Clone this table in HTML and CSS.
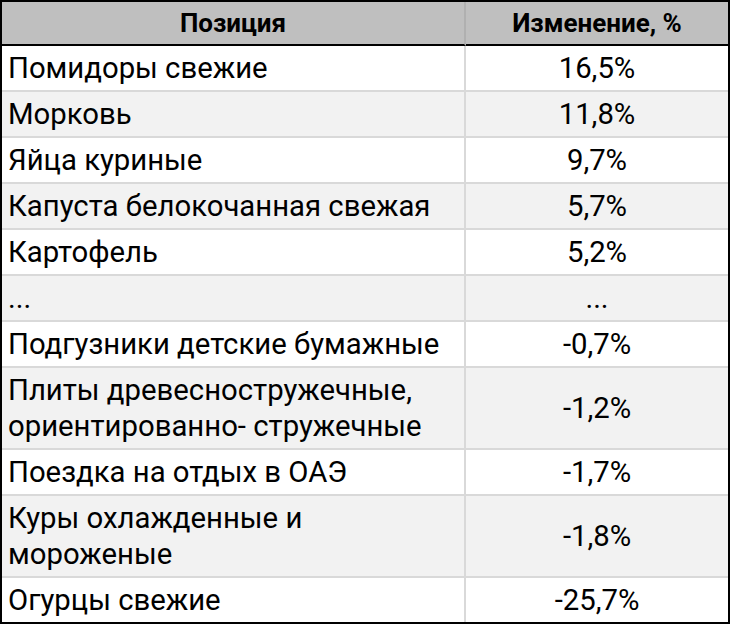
FILE: index.html
```html
<!DOCTYPE html>
<html lang="ru">
<head>
<meta charset="utf-8">
<link rel="stylesheet" href="styles.css">
</head>
<body>
<table class="tbl">
  <thead>
    <tr class="head"><th class="c1">Позиция</th><th class="c2">Изменение, %</th></tr>
  </thead>
  <tbody>
    <tr><td class="name">Помидоры свежие</td><td class="val">16,5%</td></tr>
    <tr class="alt"><td class="name">Морковь</td><td class="val">11,8%</td></tr>
    <tr><td class="name">Яйца куриные</td><td class="val">9,7%</td></tr>
    <tr class="alt"><td class="name">Капуста белокочанная свежая</td><td class="val">5,7%</td></tr>
    <tr><td class="name">Картофель</td><td class="val">5,2%</td></tr>
    <tr class="alt"><td class="name">...</td><td class="val">...</td></tr>
    <tr><td class="name">Подгузники детские бумажные</td><td class="val">-0,7%</td></tr>
    <tr class="alt"><td class="name">Плиты древесностружечные,<br>ориентированно- стружечные</td><td class="val">-1,2%</td></tr>
    <tr><td class="name">Поездка на отдых в ОАЭ</td><td class="val">-1,7%</td></tr>
    <tr class="alt"><td class="name">Куры охлажденные и<br>мороженые</td><td class="val">-1,8%</td></tr>
    <tr><td class="name">Огурцы свежие</td><td class="val">-25,7%</td></tr>
  </tbody>
</table>
</body>
</html>
```
FILE: styles.css
```css
html, body {
  margin: 0;
  padding: 0;
  background: #ffffff;
}
.tbl {
  width: 730px;
  border-collapse: separate;
  border-spacing: 0;
  border: 2px solid #000;
  font-family: Roboto, "Liberation Sans", sans-serif;
  color: #000;
  table-layout: fixed;
}
.c1 { width: 464px; }
.c2 { width: auto; }
.head th {
  background: #bfbfbf;
  height: 44px;
  padding: 0;
  font-size: 26px;
  font-weight: 700;
  text-align: center;
  border-bottom: 2px solid #000;
  box-sizing: border-box;
}
.head th.c1 { border-right: 2px solid #b0b0b0; }
td {
  font-size: 29.3px;
  line-height: 36px;
  padding: 4px 0;
  border-top: 2px solid #d9d9d9;
}
tbody tr:first-child td { border-top: none; }
td.name {
  padding-left: 6px;
  border-right: 2px solid #d9d9d9;
}
td.val { text-align: center; }
tr.alt td { background: #f2f2f2; }
```
